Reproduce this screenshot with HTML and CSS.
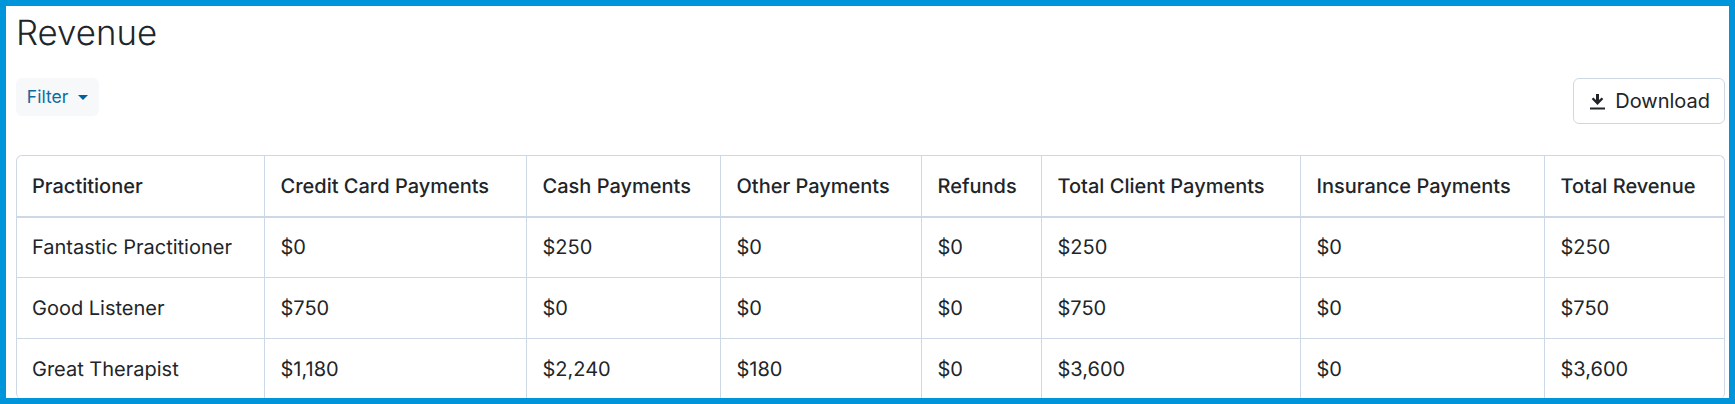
FILE: index.html
```html
<!DOCTYPE html>
<html lang="en">
<head>
    <meta charset="UTF-8">
    <meta name="viewport" content="width=device-width, initial-scale=1.0">
    <title>Revenue</title>
    <link rel="stylesheet" href="styles.css">
</head>
<body>
    <div class="frame">
        <h1 class="title">Revenue</h1>

        <div class="toolbar">
            <button class="button filter">Filter <span class="caret"></span></button>
            <button class="button download">
                <svg class="icon" viewBox="0 0 15 17" fill="currentColor">
                    <path d="M6 1h3v6l2.6-2.6 1.7 1.7-5.8 5.8-5.8-5.8 1.7-1.7L6 7z"/>
                    <rect x="0" y="14.5" width="15" height="2"/>
                </svg>
                Download
            </button>
        </div>

        <div class="table-wrap">
            <table class="report">
                <thead>
                    <tr>
                        <th class="col-name">Practitioner</th>
                        <th class="col-card">Credit Card Payments</th>
                        <th class="col-cash">Cash Payments</th>
                        <th class="col-other">Other Payments</th>
                        <th class="col-refund">Refunds</th>
                        <th class="col-client">Total Client Payments</th>
                        <th class="col-ins">Insurance Payments</th>
                        <th>Total Revenue</th>
                    </tr>
                </thead>
                <tbody>
                    <tr>
                        <td>Fantastic Practitioner</td>
                        <td>$0</td>
                        <td>$250</td>
                        <td>$0</td>
                        <td>$0</td>
                        <td>$250</td>
                        <td>$0</td>
                        <td>$250</td>
                    </tr>
                    <tr>
                        <td>Good Listener</td>
                        <td>$750</td>
                        <td>$0</td>
                        <td>$0</td>
                        <td>$0</td>
                        <td>$750</td>
                        <td>$0</td>
                        <td>$750</td>
                    </tr>
                    <tr>
                        <td>Great Therapist</td>
                        <td>$1,180</td>
                        <td>$2,240</td>
                        <td>$180</td>
                        <td>$0</td>
                        <td>$3,600</td>
                        <td>$0</td>
                        <td>$3,600</td>
                    </tr>
                </tbody>
            </table>
        </div>
    </div>
</body>
</html>
```

FILE: styles.css
```css
html, body {
    height: 100%;
}

body {
    margin: 0;
    font-family: Inter, "Liberation Sans", sans-serif;
    color: #212529;
    background: #fff;
    text-rendering: geometricPrecision;
}

.frame {
    box-sizing: border-box;
    height: 100vh;
    overflow: hidden;
    border: 6px solid #0095db;
    padding: 7px 4px 0 10px;
}

.title {
    margin: 0;
    font-size: 34.8px;
    font-weight: 300;
    line-height: 41px;
}

.toolbar {
    display: flex;
    justify-content: space-between;
    margin-top: 24px;
    margin-bottom: 31px;
}

.button {
    font-family: inherit;
    font-size: 20px;
    border-radius: 6px;
    cursor: pointer;
}

.filter {
    height: 38px;
    width: 83px;
    padding: 0 0 2px;
    font-size: 17.5px;
    color: #0b6aa2;
    background: #f6f8fa;
    border: none;
}

.caret {
    display: inline-block;
    margin-left: 5px;
    vertical-align: 3px;
    border-top: 5px solid #005f9e;
    border-left: 5px solid transparent;
    border-right: 5px solid transparent;
}

.download {
    display: flex;
    align-items: center;
    gap: 10px;
    height: 46px;
    padding: 0 14px 0 16px;
    color: #212529;
    background: #fff;
    border: 1px solid #ccd8e6;
}

.icon {
    width: 15px;
    height: 17px;
}

.table-wrap {
    height: 243px;
    border: 1px solid #ccd8e6;
    border-bottom: none;
    border-radius: 6px;
    overflow: hidden;
}

.report {
    width: 100%;
    border-collapse: collapse;
    table-layout: fixed;
    font-size: 20px;
}

.report th, .report td {
    box-sizing: border-box;
    height: 61px;
    padding: 0 16px;
    text-align: left;
    border-left: 1px solid #ccd8e6;
    border-bottom: 1px solid #ccd8e6;
    white-space: nowrap;
}

.report th:first-child, .report td:first-child {
    padding-left: 15px;
    border-left: none;
}

.report th {
    font-weight: 500;
    border-bottom-width: 2px;
}

.report tbody tr:first-child td {
    height: 60px;
}

.col-name { width: 247px; }
.col-card { width: 262px; }
.col-cash { width: 194px; }
.col-other { width: 201px; }
.col-refund { width: 120px; }
.col-client { width: 259px; }
.col-ins { width: 244px; }
```
